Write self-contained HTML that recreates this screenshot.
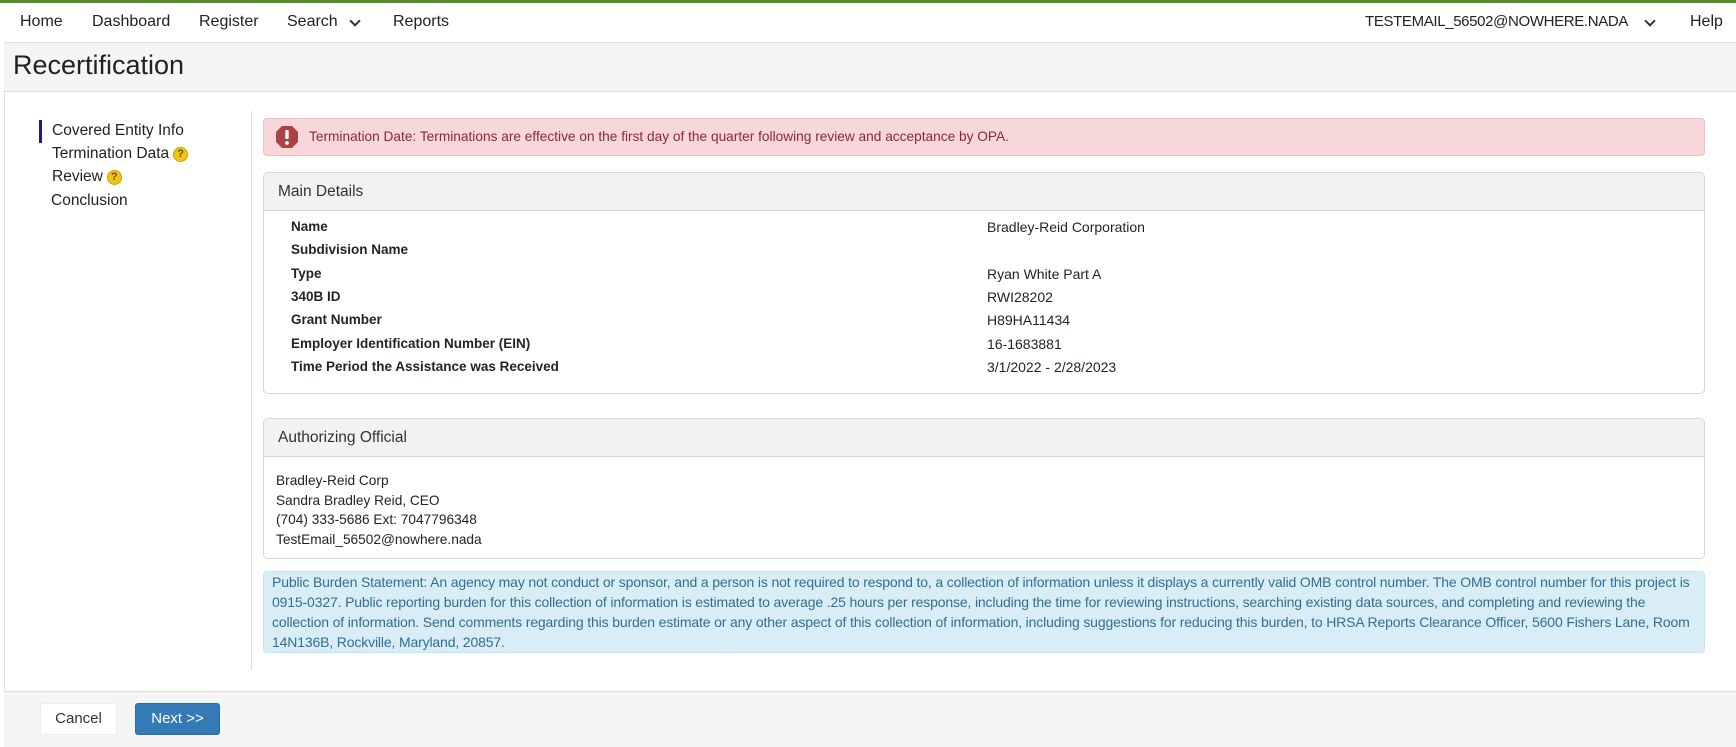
<!DOCTYPE html>
<html><head><meta charset="utf-8"><style>
*{box-sizing:border-box;margin:0;padding:0}
body{width:1736px;height:747px;overflow:hidden;background:#fff;font-family:"Liberation Sans",Arial,sans-serif;color:#212529;position:relative;font-size:14px}
.abs{position:absolute;white-space:nowrap}
.top{position:absolute;left:0;top:0;width:1736px;height:3px;background:#5a8a2a}
.nav{font-size:16px;color:#222}
.chev{display:inline-block;width:8px;height:8px;border-right:2px solid #333;border-bottom:2px solid #333;transform:rotate(45deg)}
.band{position:absolute;left:4px;top:42px;width:1732px;height:50px;background:#f5f5f5;border-top:1px solid #e3e3e3;border-bottom:1px solid #dcdcdc}
.side{font-size:15.5px;color:#222}
.q{display:inline-block;width:15px;height:15px;border-radius:50%;background:#f1c40f;border:1px solid #c9a100;color:#6b5400;font-size:11px;font-weight:bold;text-align:center;line-height:13px;vertical-align:1px;margin-left:4px}
.card{position:absolute;left:263px;width:1442px;border:1px solid #d6d6d6;border-radius:5px;overflow:hidden}
.hd{height:38px;background:#f2f2f2;border-bottom:1px solid #d6d6d6;padding-left:14px;line-height:38px;font-size:15.5px;color:#333}
.lab{font-weight:bold;font-size:13.5px}
</style></head><body>
<div class="top"></div>
<div class="abs nav" style="left:20px;top:13px">Home</div>
<div class="abs nav" style="left:92px;top:13px">Dashboard</div>
<div class="abs nav" style="left:199px;top:13px">Register</div>
<div class="abs nav" style="left:287px;top:13px">Search</div>
<div class="abs chev" style="left:351px;top:17px"></div>
<div class="abs nav" style="left:393px;top:13px">Reports</div>
<div class="abs nav" style="left:1365px;top:13px;font-size:15px;letter-spacing:-0.35px">TESTEMAIL_56502@NOWHERE.NADA</div>
<div class="abs chev" style="left:1646px;top:17px"></div>
<div class="abs nav" style="left:1690px;top:13px">Help</div>
<div class="band"></div>
<div class="abs" style="left:4px;top:92px;width:1px;height:600px;background:#ddd"></div>
<div class="abs" style="left:13px;top:50px;font-size:27px;color:#222">Recertification</div>

<div class="abs" style="left:39px;top:120px;width:3px;height:23px;background:#1a1a8c"></div>
<div class="abs side" style="left:52px;top:122px">Covered Entity Info</div>
<div class="abs side" style="left:52px;top:145px">Termination Data<span class="q">?</span></div>
<div class="abs side" style="left:52px;top:168px">Review<span class="q">?</span></div>
<div class="abs side" style="left:51px;top:192px">Conclusion</div>
<div class="abs" style="left:251px;top:111px;width:1px;height:559px;background:#ddd"></div>

<div class="abs" style="left:263px;top:118px;width:1442px;height:38px;background:#f8d7da;border:1px solid #f1bfc4;border-radius:4px"></div>
<svg class="abs" style="left:275px;top:125px" width="24" height="24" viewBox="0 0 24 24"><polygon points="7,1 17,1 23,7 23,17 17,23 7,23 1,17 1,7" fill="#a94442"/><rect x="10.3" y="5" width="3.4" height="9" rx="1" fill="#fff"/><circle cx="12" cy="18" r="1.9" fill="#fff"/></svg>
<div class="abs" style="left:309px;top:129px;font-size:13.7px;color:#8a2a2e">Termination Date: Terminations are effective on the first day of the quarter following review and acceptance by OPA.</div>

<div class="card" style="top:172px;height:222px"><div class="hd">Main Details</div></div>
<div class="abs lab" style="left:291px;top:219px">Name</div>
<div class="abs lab" style="left:291px;top:242px">Subdivision Name</div>
<div class="abs lab" style="left:291px;top:266px">Type</div>
<div class="abs lab" style="left:291px;top:289px">340B ID</div>
<div class="abs lab" style="left:291px;top:312px">Grant Number</div>
<div class="abs lab" style="left:291px;top:336px">Employer Identification Number (EIN)</div>
<div class="abs lab" style="left:291px;top:359px">Time Period the Assistance was Received</div>
<div class="abs" style="left:987px;top:219px">Bradley-Reid Corporation</div>
<div class="abs" style="left:987px;top:266px">Ryan White Part A</div>
<div class="abs" style="left:987px;top:289px">RWI28202</div>
<div class="abs" style="left:987px;top:312px">H89HA11434</div>
<div class="abs" style="left:987px;top:336px">16-1683881</div>
<div class="abs" style="left:987px;top:359px">3/1/2022 - 2/28/2023</div>

<div class="card" style="top:418px;height:141px"><div class="hd">Authorizing Official</div></div>
<div class="abs" style="left:276px;top:471px;line-height:19.5px;font-size:13.7px">Bradley-Reid Corp<br>Sandra Bradley Reid, CEO<br>(704) 333-5686 Ext: 7047796348<br>TestEmail_56502@nowhere.nada</div>

<div class="abs" style="left:263px;top:571px;width:1442px;height:82px;background:#d9edf7;border:1px solid #bce8f1;border-radius:4px"></div>
<div class="abs" style="left:272px;top:572px;line-height:20px;font-size:14px;color:#31708f;letter-spacing:-0.15px">Public Burden Statement: An agency may not conduct or sponsor, and a person is not required to respond to, a collection of information unless it displays a currently valid OMB control number. The OMB control number for this project is<br>0915-0327. Public reporting burden for this collection of information is estimated to average .25 hours per response, including the time for reviewing instructions, searching existing data sources, and completing and reviewing the<br>collection of information. Send comments regarding this burden estimate or any other aspect of this collection of information, including suggestions for reducing this burden, to HRSA Reports Clearance Officer, 5600 Fishers Lane, Room<br>14N136B, Rockville, Maryland, 20857.</div>

<div class="abs" style="left:4px;top:691px;width:1732px;height:56px;background:#f5f5f5;border-top:1px solid #ddd"></div>
<div class="abs" style="left:40px;top:703px;width:77px;height:32px;background:#fff;border:1px solid #eee;border-radius:3px;text-align:center;line-height:30px;font-size:15px;color:#333">Cancel</div>
<div class="abs" style="left:135px;top:703px;width:85px;height:32px;background:#337ab7;border:1px solid #2e6da4;border-radius:3px;text-align:center;line-height:30px;font-size:15px;color:#fff">Next &gt;&gt;</div>
</body></html>
